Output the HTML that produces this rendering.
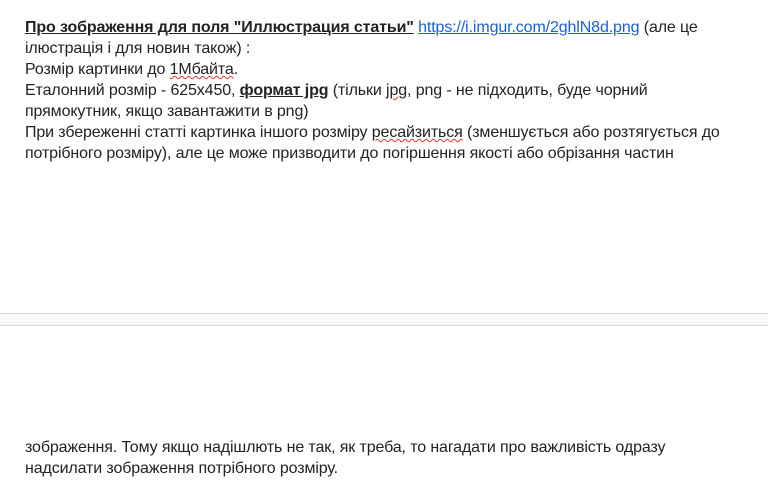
<!DOCTYPE html>
<html><head><meta charset="utf-8"><style>
body{margin:0;width:768px;height:501px;background:#fff;position:relative;overflow:hidden;font-family:"Liberation Sans",Arial,sans-serif;font-size:16px;color:#222;}
.t{position:absolute;left:25px;line-height:21px;white-space:nowrap;letter-spacing:-0.12px;}
b{text-decoration:underline;}
a{color:#1a5fd6;text-decoration:underline;}
.sq{text-decoration:underline wavy #d33;text-decoration-thickness:1px;}
.band{position:absolute;left:0;top:313px;width:768px;height:11px;background:#f8f9fa;border-top:1px solid #dadce0;border-bottom:1px solid #dadce0;}
</style></head><body>
<div class="t" style="top:17px">
<div><b>Про зображення для поля "Иллюстрация статьи"</b> <a>https://i.imgur.com/2ghlN8d.png</a> (але це</div>
<div>ілюстрація і для новин також) :</div>
<div>Розмір картинки до <span class="sq">1Мбайта</span>.</div>
<div>Еталонний розмір - 625x450, <b>формат jpg</b> (тільки <span class="sq">jpg</span>, png - не підходить, буде чорний</div>
<div>прямокутник, якщо завантажити в png)</div>
<div>При збереженні статті картинка іншого розміру <span class="sq">ресайзиться</span> (зменшується або розтягується до</div>
<div>потрібного розміру), але це може призводити до погіршення якості або обрізання частин</div>
</div>
<div class="band"></div>
<div class="t" style="top:437px">
<div>зображення. Тому якщо надішлють не так, як треба, то нагадати про важливість одразу</div>
<div>надсилати зображення потрібного розміру.</div>
</div>
</body></html>
